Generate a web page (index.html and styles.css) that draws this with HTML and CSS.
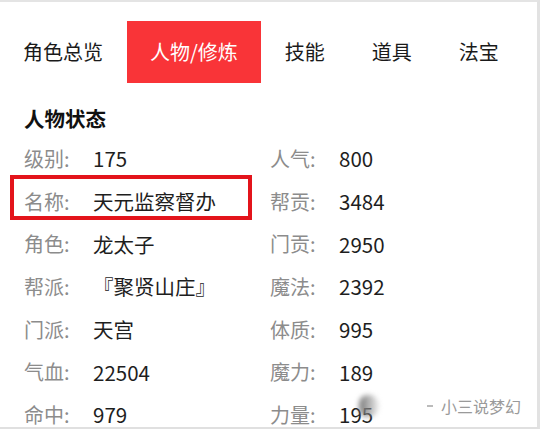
FILE: index.html
```html
<!DOCTYPE html>
<html lang="zh-CN">
  <head>
    <meta charset="UTF-8" />
    <meta name="viewport" content="width=device-width, initial-scale=1.0" />
    <title>人物状态</title>
    <link rel="stylesheet" href="styles.css">
  </head>
  <body>
    <div class="panel">
      <div class="tabs">
        <div class="tab">角色总览</div>
        <div class="tab active">人物/修炼</div>
        <div class="tab">技能</div>
        <div class="tab">道具</div>
        <div class="tab">法宝</div>
      </div>
      <div class="title">人物状态</div>
      <div class="stats">
        <div class="stat"><span class="label">级别:</span><span class="value">175</span></div>
        <div class="stat"><span class="label">人气:</span><span class="value">800</span></div>
        <div class="stat marked"><span class="label">名称:</span><span class="value">天元监察督办</span><span class="mark"></span></div>
        <div class="stat"><span class="label">帮贡:</span><span class="value">3484</span></div>
        <div class="stat"><span class="label">角色:</span><span class="value">龙太子</span></div>
        <div class="stat"><span class="label">门贡:</span><span class="value">2950</span></div>
        <div class="stat"><span class="label">帮派:</span><span class="value">『聚贤山庄』</span></div>
        <div class="stat"><span class="label">魔法:</span><span class="value">2392</span></div>
        <div class="stat"><span class="label">门派:</span><span class="value">天宫</span></div>
        <div class="stat"><span class="label">体质:</span><span class="value">995</span></div>
        <div class="stat"><span class="label">气血:</span><span class="value">22504</span></div>
        <div class="stat"><span class="label">魔力:</span><span class="value">189</span></div>
        <div class="stat"><span class="label">命中:</span><span class="value">979</span></div>
        <div class="stat"><span class="label">力量:</span><span class="value">195</span></div>
      </div>
      <!-- watermark -->
      <div class="watermark"><span class="blob"></span><span class="dash"></span>小三说梦幻</div>
    </div>
  </body>
</html>
```

FILE: styles.css
```css
body {margin: 0;background: #fff;font-family: "Noto Sans CJK SC", "Noto Sans", sans-serif;}
.panel {
  position: relative;box-sizing: border-box;width: 540px;height: 429px;overflow: hidden;
  border-top: 2px solid #e4e4e4;border-right: 3px solid #e2e2e2;border-bottom: 2px solid #e0e0e0;
}
.tabs {display: flex;margin-top: 19px;height: 62px;}
.tab {padding: 0 23.5px;line-height: 62px;font-size: 20px;color: #1a1a1a;white-space: nowrap;}
.tab:first-child {padding-left: 23px;}
.active {background-color: #f93438;color: #fff;}
.title {margin: 20px 0 0 24px;line-height: 30px;font-size: 20.5px;font-weight: bold;color: #111;}
.stats {display: grid;grid-template-columns: 246px 246px;margin: 4px 0 0 24px;}
.stat {position: relative;display: flex;height: 42.7px;align-items: center;font-size: 20px;white-space: nowrap;}
.label {width: 69px;color: #8c8c8c;}
.value {color: #1e1e1e;font-size: 20.5px;}
/* red box round the name */
.mark {position: absolute;left: -14px;right: 18px;top: -5px;bottom: 2px;border: 4px solid #e3141b;}
.watermark {
  position: absolute;right: 16px;bottom: 9px;display: flex;align-items: center;
  font-size: 16px;color: #9a9a9a;
}
.blob {
  width: 20px;height: 22px;margin-right: 48px;border-radius: 40% 50% 50% 40%;
  background: linear-gradient(to right, #777, rgba(200,200,200,0.3));filter: blur(2.5px);
}
.dash {width: 6px;height: 2px;margin-right: 8px;background: #bbb;}
```
